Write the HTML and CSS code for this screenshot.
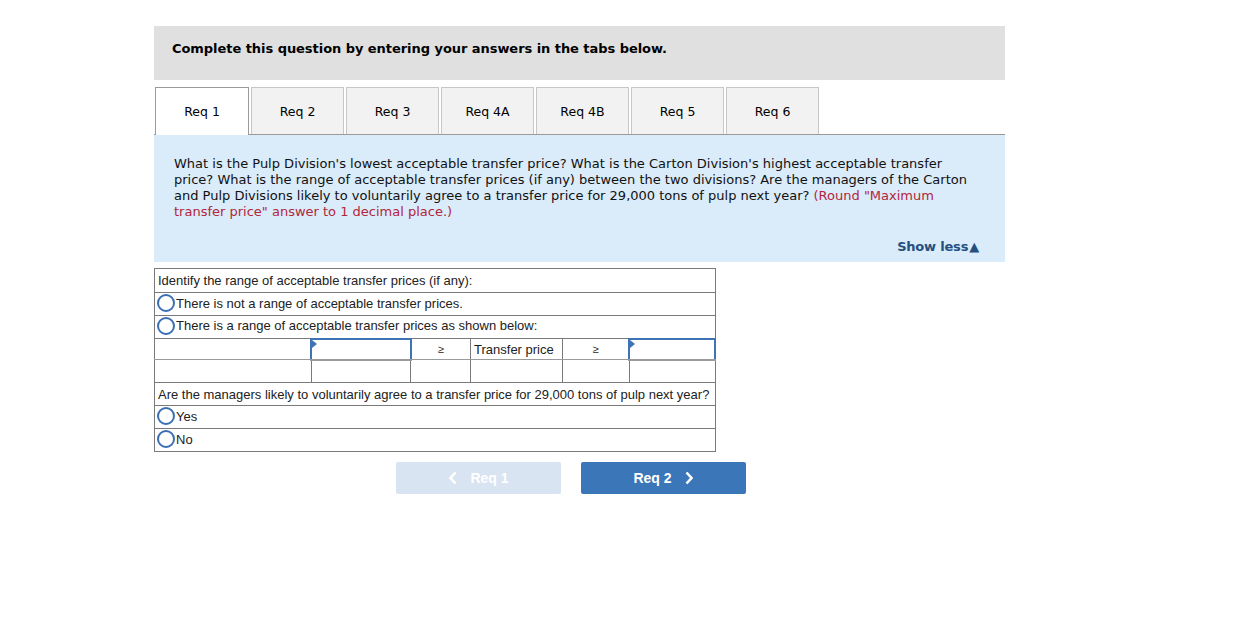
FILE: index.html
```html
<!DOCTYPE html>
<html>
<head>
<meta charset="utf-8">
<link rel="stylesheet" href="styles.css">
</head>
<body>
<div class="page">
  <div class="instructions">Complete this question by entering your answers in the tabs below.</div>
  <div class="tabs">
    <div class="tab active">Req 1</div>
    <div class="tab">Req 2</div>
    <div class="tab">Req 3</div>
    <div class="tab">Req 4A</div>
    <div class="tab">Req 4B</div>
    <div class="tab">Req 5</div>
    <div class="tab">Req 6</div>
  </div>
  <div class="question">
    <p class="qtext">What is the Pulp Division's lowest acceptable transfer price? What is the Carton Division's highest acceptable transfer price? What is the range of acceptable transfer prices (if any) between the two divisions? Are the managers of the Carton and Pulp Divisions likely to voluntarily agree to a transfer price for 29,000 tons of pulp next year? <span class="hint">(Round "Maximum transfer price" answer to 1 decimal place.)</span></p>
    <div class="showless">Show less<span class="tri">▲</span></div>
  </div>

  <table class="answer">
    <tr class="r1"><td colspan="6">Identify the range of acceptable transfer prices (if any):</td></tr>
    <tr><td colspan="6"><span class="radio"></span>There is not a range of acceptable transfer prices.</td></tr>
    <tr><td colspan="6"><span class="radio"></span>There is a range of acceptable transfer prices as shown below:</td></tr>
    <tr class="r4">
      <td class="c1"></td>
      <td class="c2 input"><span class="flag"></span></td>
      <td class="c3 center">≥</td>
      <td class="c4">Transfer price</td>
      <td class="c5 center">≥</td>
      <td class="c6 input"><span class="flag"></span></td>
    </tr>
    <tr class="r5">
      <td></td><td></td><td></td><td></td><td></td><td></td>
    </tr>
    <tr><td colspan="6">Are the managers likely to voluntarily agree to a transfer price for 29,000 tons of pulp next year?</td></tr>
    <tr><td colspan="6"><span class="radio"></span>Yes</td></tr>
    <tr><td colspan="6"><span class="radio"></span>No</td></tr>
  </table>

  <div class="nav">
    <div class="btn prev">
      <svg class="chev" width="10" height="14" viewBox="0 0 10 14"><path d="M7.5 1.5 L2.5 7 L7.5 12.5" fill="none" stroke="#fff" stroke-width="2.6"/></svg>
      <span>Req 1</span>
    </div>
    <div class="btn next">
      <span>Req 2</span>
      <svg class="chev" width="10" height="14" viewBox="0 0 10 14"><path d="M2.5 1.5 L7.5 7 L2.5 12.5" fill="none" stroke="#fff" stroke-width="2.6"/></svg>
    </div>
  </div>
</div>
</body>
</html>
```
FILE: styles.css
```css
html, body {
  margin: 0;
  padding: 0;
  background: #fff;
}
.page {
  margin-left: 154px;
  padding-top: 26px;
  width: 851px;
  font-family: "DejaVu Sans", Verdana, sans-serif;
  color: #000;
}
.instructions {
  background: #e0e0e0;
  height: 54px;
  box-sizing: border-box;
  padding: 15px 0 0 18px;
  font-weight: bold;
  font-size: 13px;
  line-height: 16px;
  letter-spacing: -0.05px;
}
.tabs {
  display: flex;
  gap: 2px;
  margin-top: 7px;
  padding-left: 1px;
  border-bottom: 1px solid #9a9a9a;
  height: 47px;
}
.tab {
  width: 93px;
  height: 47px;
  box-sizing: border-box;
  background: #f2f2f2;
  border: 1px solid #c6c6c6;
  border-bottom: none;
  font-size: 12.5px;
  line-height: 48px;
  text-align: center;
}
.tab.active {
  width: 94px;
  background: #fff;
  border: 1px solid #9a9a9a;
  border-bottom: none;
  height: 48px;
}
.question {
  background: #daebf9;
  height: 127px;
  box-sizing: border-box;
  padding: 21px 26px 0 20px;
  display: flex;
  flex-direction: column;
}
.qtext {
  margin: 0;
  font-size: 13px;
  line-height: 16px;
  color: #111;
}
.hint {
  color: #b3263c;
}
.showless {
  margin-top: auto;
  margin-bottom: 8px;
  align-self: flex-end;
  font-weight: bold;
  font-size: 13px;
  color: #244f7f;
  letter-spacing: -0.2px;
}
.tri {
  font-size: 13px;
  margin-left: 1px;
}
.answer {
  margin-top: 6px;
  width: 562px;
  border-collapse: collapse;
  font-family: "Liberation Sans", Arial, sans-serif;
  font-size: 13px;
  color: #222;
}
.answer td {
  border: 1px solid #7a7a7a;
  height: 23px;
  padding: 0 0 0 3px;
  box-sizing: border-box;
  vertical-align: middle;
  line-height: 15px;
}
.answer tr.r1 td {
  height: 24px;
}
.answer tr.r4 td {
  height: 21px;
  border-bottom-color: #9a9a9a;
}
.answer tr.r5 td {
  height: 23px;
  border-top-color: #9a9a9a;
}
.answer td .radio {
  display: inline-block;
  width: 14px;
  height: 14px;
  border: 2px solid #3a6fb2;
  border-radius: 50%;
  vertical-align: middle;
  margin: -2px 1px 0 -1px;
}
.c1 { width: 157px; }
.c2 { width: 100px; }
.c3 { width: 60px; }
.c4 { width: 92px; }
.c5 { width: 67px; }
.c6 { width: 86px; }
.center {
  text-align: center;
  padding: 0 !important;
  font-size: 11px;
}
.answer td.input {
  position: relative;
  border: 2px solid #3e74b6;
  padding: 0;
}
.flag {
  position: absolute;
  left: 0;
  top: 0;
  width: 0;
  height: 0;
  border-top: 4px solid transparent;
  border-bottom: 4px solid transparent;
  border-left: 5px solid #3e74b6;
}
.nav {
  display: flex;
  gap: 20px;
  margin-top: 10px;
  margin-left: 242px;
}
.btn {
  width: 165px;
  height: 32px;
  border-radius: 2px;
  display: flex;
  align-items: center;
  justify-content: center;
  gap: 12px;
  font-family: "Liberation Sans", Arial, sans-serif;
  font-weight: bold;
  font-size: 14px;
  color: #fff;
}
.btn.prev {
  background: #d9e4f2;
}
.btn.next {
  background: #3a76b8;
}
.chev {
  display: block;
}
```
